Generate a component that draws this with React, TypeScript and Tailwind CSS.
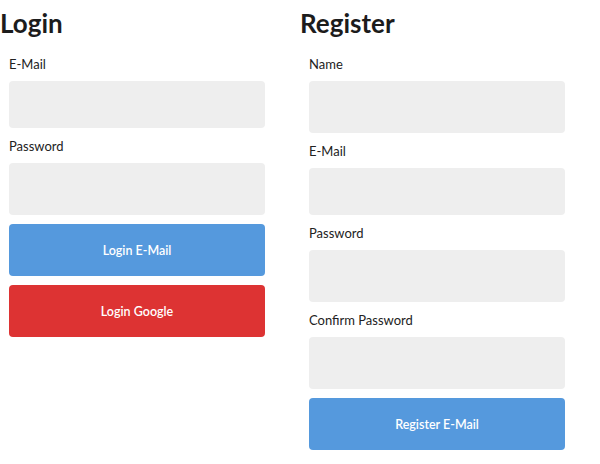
type Field = {
  label: string;
  type: string;
  height: string;
};

const loginFields: Field[] = [
  { label: "E-Mail", type: "email", height: "h-[47px]" },
  { label: "Password", type: "password", height: "h-[52px]" },
];

const registerFields: Field[] = [
  { label: "Name", type: "text", height: "h-[52px]" },
  { label: "E-Mail", type: "email", height: "h-[47px]" },
  { label: "Password", type: "password", height: "h-[52px]" },
  { label: "Confirm Password", type: "password", height: "h-[52px]" },
];

function FormField({ label, type, height }: Field) {
  return (
    <label className="flex flex-col">
      <span className="pt-[10px] pb-[8px] text-[13px] leading-[17px] text-[#222]">{label}</span>
      <input
        type={type}
        className={`${height} w-full rounded-[4px] bg-[#eeeeee] px-3 text-[13px] outline-none`}
      />
    </label>
  );
}

function ActionButton({ label, color }: { label: string; color: string }) {
  return (
    <button
      type="button"
      className={`mt-[9px] h-[52px] w-full rounded-[4px] pt-[3px] ${color} text-[12.5px] font-semibold text-white`}
    >
      {label}
    </button>
  );
}

function Panel({
  title,
  fields,
  children,
}: {
  title: string;
  fields: Field[];
  children: React.ReactNode;
}) {
  return (
    <section className="w-[300px]">
      <h1 className="text-[26px] font-bold leading-[46px] text-[#1c1c1c]">{title}</h1>
      <form className="flex w-[265px] flex-col pl-[9px]">
        {fields.map((f) => (
          <FormField key={f.label} {...f} />
        ))}
        {children}
      </form>
    </section>
  );
}

export default function App() {
  return (
    <div className="flex h-[464px] w-[600px] bg-white font-['Lato',sans-serif]">
      <Panel title="Login" fields={loginFields}>
        <ActionButton label="Login E-Mail" color="bg-[#5599dd]" />
        <ActionButton label="Login Google" color="bg-[#dd3333]" />
      </Panel>
      <Panel title="Register" fields={registerFields}>
        <ActionButton label="Register E-Mail" color="bg-[#5599dd]" />
      </Panel>
    </div>
  );
}
